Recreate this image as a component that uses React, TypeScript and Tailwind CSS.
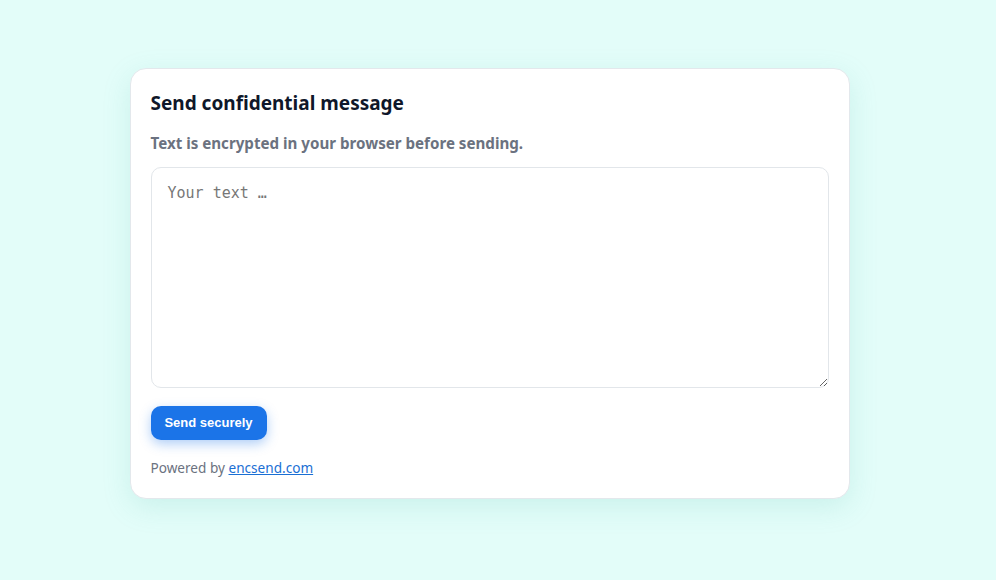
export default function App() {
  return (
    <main className="min-h-screen bg-[#e3fdf9] pt-[68px] pr-[17px]" style={{ minHeight: 580 }}>
      <div
        className="mx-auto w-[720px] rounded-2xl border border-[#e3e8ec] bg-white px-[20px] pt-[21px] pb-[20px] shadow-[0_8px_28px_rgba(90,190,180,0.18)]"
        style={{ fontFamily: '"Noto Sans", "Open Sans", sans-serif' }}
      >
        <h1 className="text-[19px] font-bold leading-[26px] text-[#0f172a]">Send confidential message</h1>
        <p className="mt-[16px] text-[15.15px] font-bold leading-[22px] text-[#6b7280]">
          Text is encrypted in your browser before sending.
        </p>
        <textarea
          placeholder="Your text …"
          className="mt-[13px] block h-[221px] w-full rounded-[10px] border border-[#e2e6ea] px-[16px] py-[14px] text-[15px] text-[#111827] outline-none placeholder:text-[#777777]"
          style={{ fontFamily: '"DejaVu Sans Mono", monospace' }}
        />
        <button
          className="mt-[18px] h-[34px] w-[116px] rounded-[10px] bg-[#1b74e8] text-[13px] font-bold text-white shadow-[0_4px_12px_rgba(27,116,232,0.35)]"
          style={{ fontFamily: '"Liberation Sans", Arial, sans-serif' }}
        >
          Send securely
        </button>
        <p className="mt-[18px] text-[13.6px] leading-[20px] text-[#6b7280]">
          Powered by{" "}
          <a href="#" className="text-[#1a6fd4] underline">
            encsend.com
          </a>
        </p>
      </div>
    </main>
  )
}
